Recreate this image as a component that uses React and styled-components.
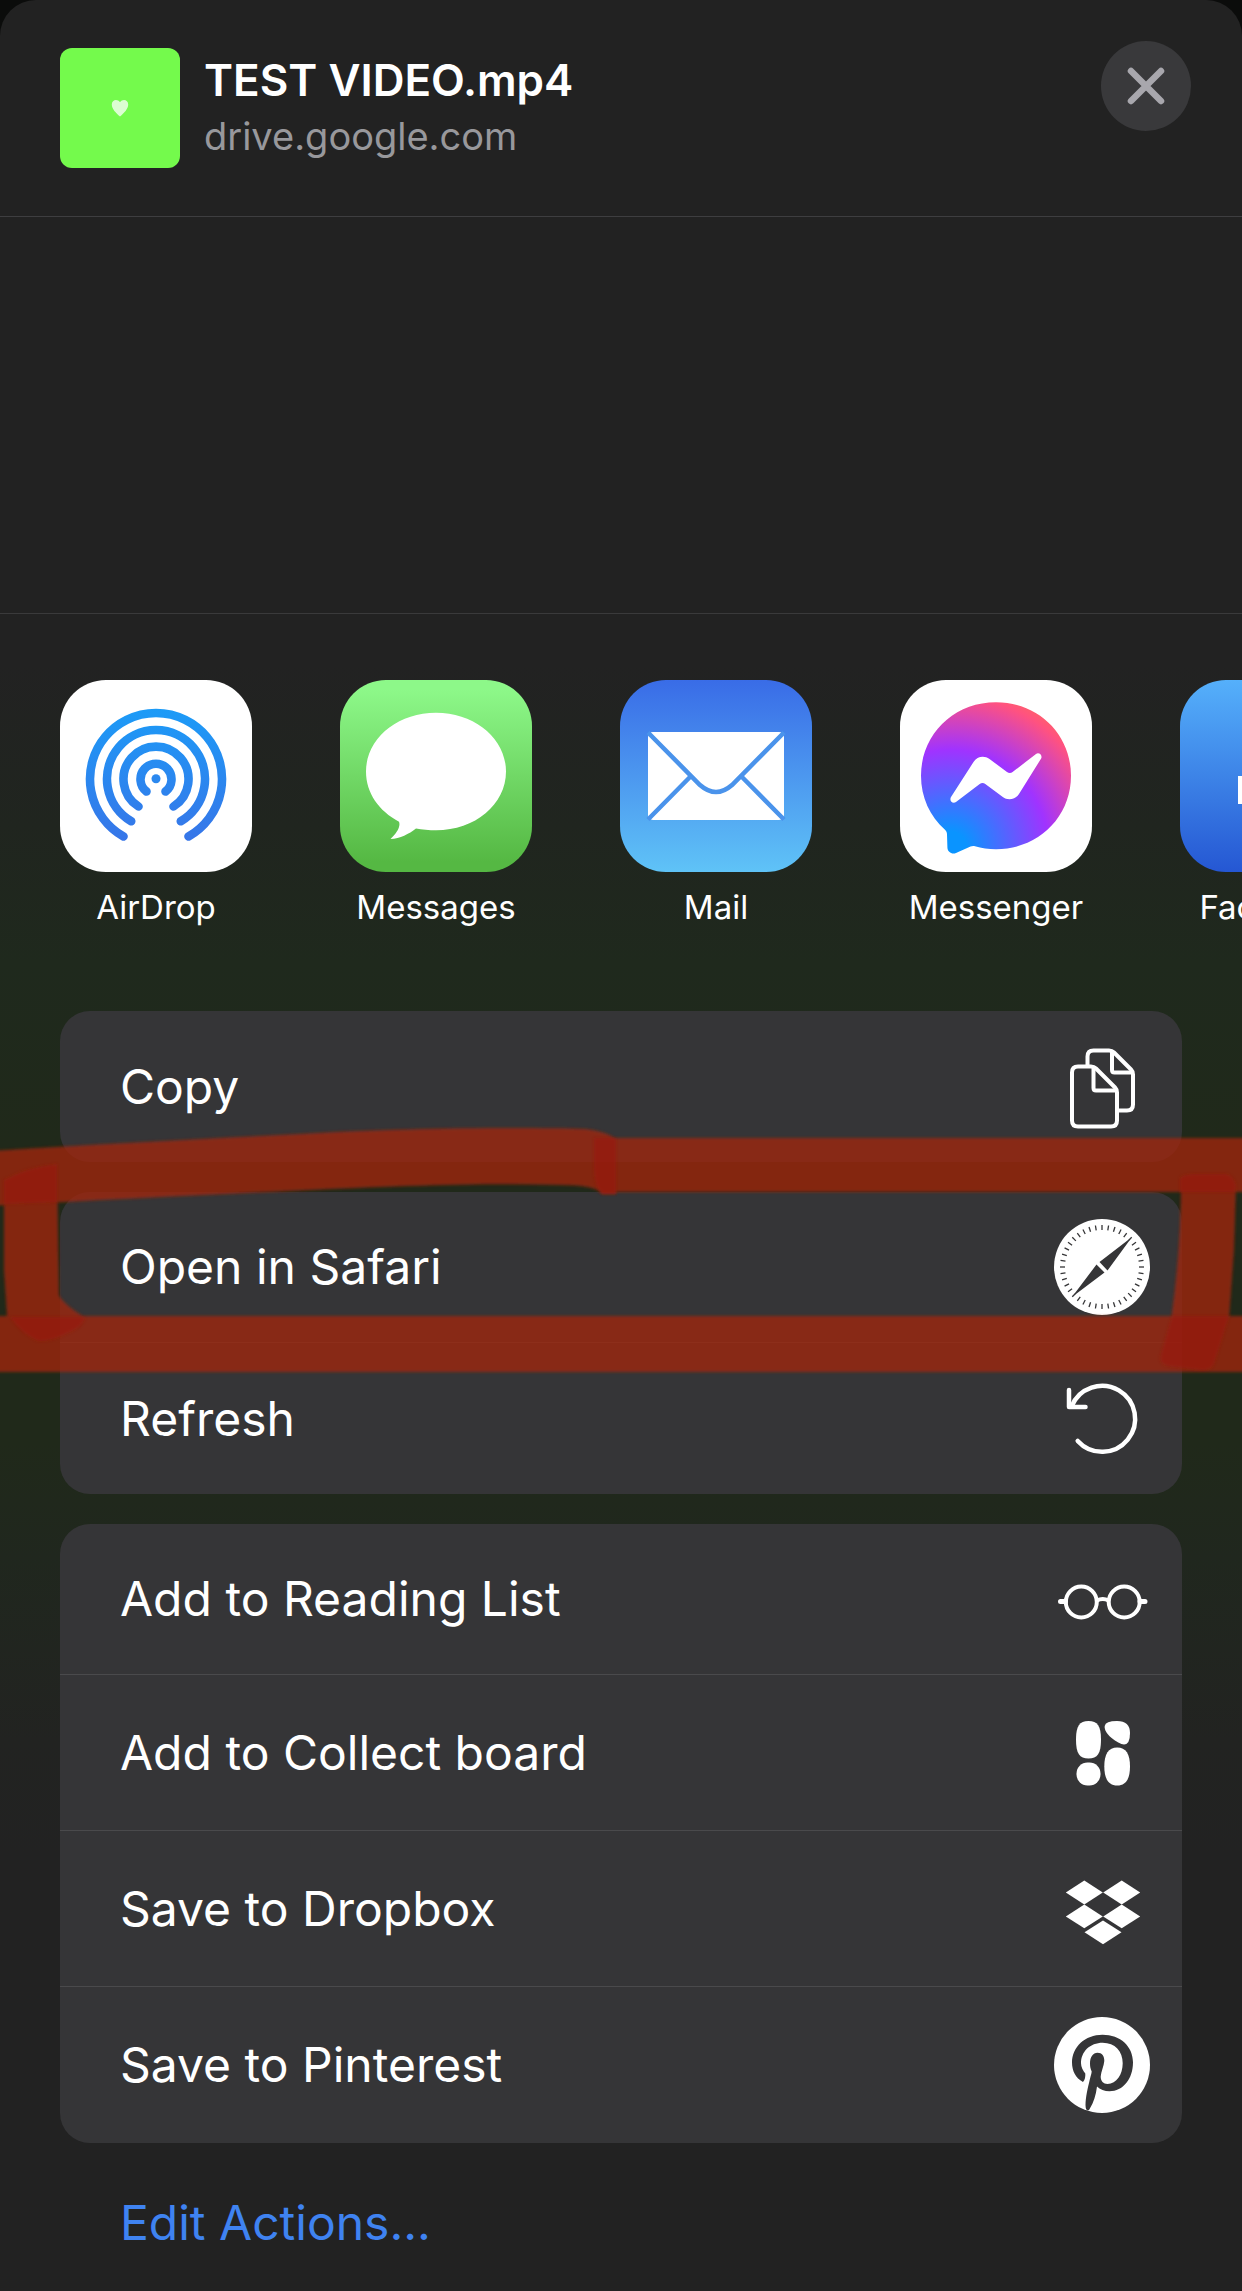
import React from 'react';
import styled, { createGlobalStyle } from 'styled-components';

const GlobalStyle = createGlobalStyle`
  * {
    box-sizing: border-box;
  }

  body {
    margin: 0;
    background: #0b0c0b;
    font-family: Inter, "Liberation Sans", sans-serif;
  }

  button {
    border: none;
    background: none;
    padding: 0;
    color: inherit;
    font-family: inherit;
    cursor: pointer;
  }

  svg {
    display: block;
  }
`;

const Sheet = styled.main`
  min-height: 100vh;
  border-radius: 36px 36px 0 0;
  overflow: hidden;
  color: white;
  background: linear-gradient(
    180deg,
    #222222 0%,
    #222222 29%,
    #20251f 36%,
    #1f291d 42%,
    #20291a 50%,
    #20291a 63%,
    #20271e 68%,
    #222321 76%,
    #222222 81%
  );
`;

const Header = styled.header`
  display: flex;
  align-items: flex-start;
  padding: 48px 51px 48px 60px;
  border-bottom: 1px solid #3e3e40;
`;

const Thumbnail = styled.div`
  display: flex;
  align-items: center;
  justify-content: center;
  width: 120px;
  height: 120px;
  border-radius: 12px;
  background: #74fa4c;
`;

const FileInfo = styled.div`
  flex: 1;
  min-width: 0;
  padding-left: 24px;
`;

const FileName = styled.h1`
  margin: 4px 0 0;
  font-size: 44px;
  line-height: 56px;
  font-weight: 600;
`;

const FileSource = styled.p`
  margin: 4px 0 0;
  font-size: 38px;
  line-height: 48px;
  color: #98989c;
`;

const CloseButton = styled.button`
  display: flex;
  align-items: center;
  justify-content: center;
  width: 90px;
  height: 90px;
  margin-top: -7px;
  border-radius: 50%;
  background: #39393b;
`;

const Contacts = styled.section`
  height: 397px;
  border-bottom: 1px solid #3a3a3b;
`;

const Apps = styled.section`
  display: flex;
  gap: 88px;
  padding: 66px 0 84px 60px;
  overflow: hidden;
`;

const AppButton = styled.button`
  flex: 0 0 192px;
  display: flex;
  flex-direction: column;
  align-items: center;
  gap: 15px;
  font-size: 33px;
  line-height: 40px;
`;

const AppTile = styled.span`
  width: 192px;
  height: 192px;
  border-radius: 46px;
  overflow: hidden;
  background: ${({ $fill }) => $fill};
`;

const Actions = styled.section`
  position: relative;
  display: flex;
  flex-direction: column;
  gap: 30px;
  padding: 0 60px;
`;

const Card = styled.ul`
  margin: 0;
  padding: 0;
  list-style: none;
  border-radius: 30px;
  background: #353537;
`;

const Row = styled.li`
  height: ${({ $tall }) => ($tall ? '156px' : '151px')};

  &:not(:last-child) {
    border-bottom: 1px solid #4a4a4c;
  }
`;

const RowButton = styled.button`
  display: flex;
  align-items: center;
  justify-content: space-between;
  width: 100%;
  height: 100%;
  padding: 0 32px 0 60px;
  font-size: 48px;
  line-height: 60px;
  text-align: left;
`;

const Marker = styled.svg`
  position: absolute;
  top: 109px;
  left: 0;
  width: 100%;
  height: 260px;
  pointer-events: none;
`;

const Footer = styled.footer`
  padding: 50px 120px 38px;
`;

const EditButton = styled.button`
  font-size: 48px;
  line-height: 60px;
  color: #3f83f1;
`;

const HeartIcon = () => (
  <svg width="18" height="18" viewBox="0 0 18 18" aria-hidden="true">
    <path d="M9 17.500C5 14 0.800 10 0.800 5.500C0.800 0.500 6.500 -0.500 9 3.200C11.500 -0.500 17.200 0.500 17.200 5.500C17.200 10 13 14 9 17.500Z" fill="#dcfdd2" />
  </svg>
);

const CloseIcon = () => (
  <svg width="40" height="40" viewBox="0 0 40 40" aria-hidden="true">
    <path d="M5 5L35 35M35 5L5 35" stroke="#a8a7ad" strokeWidth="6.500" strokeLinecap="round" />
  </svg>
);

const AirDropIcon = () => (
  <svg width="192" height="192" viewBox="0 0 192 192" aria-hidden="true">
    <defs>
      <linearGradient id="airdrop" gradientUnits="userSpaceOnUse" x1="0" y1="29" x2="0" y2="162">
        <stop offset="0" stopColor="#1c9bf7" />
        <stop offset="1" stopColor="#3775e8" />
      </linearGradient>
    </defs>
    <g fill="none" stroke="url(#airdrop)" strokeWidth="8.600" strokeLinecap="round">
      <path d="M63.500 156.500A66 66 0 1 1 128.500 156.500" />
      <path d="M71.200 141.300A49 49 0 1 1 120.800 141.300" />
      <path d="M78.500 126.500A32.500 32.500 0 1 1 113.500 126.500" />
      <path d="M86.500 111.500A15.500 15.500 0 1 1 105.500 111.500" />
    </g>
    <circle cx="96" cy="98.700" r="4.500" fill="#2b88ef" />
  </svg>
);

const MessagesIcon = () => (
  <svg width="192" height="192" viewBox="0 0 192 192" aria-hidden="true">
    <path
      d="M96 32.700C135 32.700 166 58.500 166 91.500C166 124.500 135 150.300 96 150.300C89 150.300 82 149.500 76 148.500C69 154 60 158.500 50.500 159C56 154 61 147 59 141.700C39 131 26 113 26 91.500C26 58.500 57 32.700 96 32.700Z"
      fill="white"
    />
  </svg>
);

const MailIcon = () => (
  <svg width="192" height="192" viewBox="0 0 192 192" aria-hidden="true">
    <rect x="28" y="52" width="136" height="88" rx="5" fill="white" />
    <g fill="none" stroke="#4a93eb" strokeWidth="4.500">
      <path d="M28 52.500L80 105Q96 119 112 105L164 52.500" />
      <path d="M71 96L28 139.500M121 96L164 139.500" />
    </g>
  </svg>
);

const MessengerIcon = () => (
  <svg width="192" height="192" viewBox="0 0 192 192" aria-hidden="true">
    <defs>
      <radialGradient id="messenger" gradientUnits="userSpaceOnUse" cx="50" cy="168" r="164">
        <stop offset="0" stopColor="#0a94ff" />
        <stop offset="0.100" stopColor="#0a94ff" />
        <stop offset="0.600" stopColor="#a033ff" />
        <stop offset="0.930" stopColor="#ff5280" />
        <stop offset="1" stopColor="#ff6168" />
      </radialGradient>
    </defs>
    <path
      d="M96 22.300C138 22.300 171 54 171 95.800C171 137.500 138 169.200 96 169.200C88.500 169.200 81.500 168.200 75 166.300C73.500 165.900 72 166 70.500 166.600L56 173C52 174.800 47.500 172 47.400 167.500L47 154.500C47 152.500 46.200 151 45 149.800C30 136.500 21 117.500 21 95.800C21 54 54 22.300 96 22.300Z"
      fill="url(#messenger)"
    />
    <path
      d="M51 117L73.500 82C77 76.500 84 75 89.500 79L107 92C108.700 93.300 111 93.300 112.600 92L136 74C139 71.700 143 75.500 141 78.700L119 114C115.500 119.500 108 121 102.800 117L85.300 104C83.700 102.700 81.400 102.700 79.700 104L56 122C52.500 124.500 49 120.500 51 117Z"
      fill="white"
    />
  </svg>
);

const FacebookIcon = () => (
  <svg width="192" height="192" viewBox="0 0 192 192" aria-hidden="true">
    <path
      d="M84 192V124H58V96H84V76C84 50 99 36 123 36C134 36 144 38 144 38V64H131C118 64 114 72 114 80V96H143L138 124H114V192Z"
      fill="white"
    />
  </svg>
);

const CopyIcon = () => (
  <svg width="96" height="96" viewBox="0 0 96 96" aria-hidden="true">
    <g fill="none" stroke="white" strokeWidth="4" strokeLinejoin="round">
      <path d="M33.500 27V17.500Q33.500 11.500 39.500 11.500H55Q58 11.500 60 13.500L77 30.500Q79 32.500 79 35.500V65.500Q79 71.500 73 71.500H64" />
      <path d="M58 12V31Q58 33.500 60.500 33.500H78" />
      <path d="M24 27.500H37Q40 27.500 42 29.500L61 48.500Q63 50.500 63 53.500V81.500Q63 87.500 57 87.500H24Q18 87.500 18 81.500V33.500Q18 27.500 24 27.500Z" />
      <path d="M39.500 28V49Q39.500 51.500 42 51.500H62" />
    </g>
  </svg>
);

const ticks = Array.from({ length: 40 }, (_, i) => i * 9);

const SafariIcon = () => (
  <svg width="96" height="96" viewBox="0 0 96 96" aria-hidden="true">
    <circle cx="48" cy="48" r="48" fill="white" />
    {ticks.map((angle) => (
      <path key={angle} d="M48 6V11" stroke="#353537" strokeWidth="1.300" transform={`rotate(${angle} 48 48)`} />
    ))}
    <path d="M78 18L53.500 51.500L45.500 43ZM18 78L42.500 45.500L50.500 53.500Z" fill="#353537" />
  </svg>
);

const RefreshIcon = () => (
  <svg width="96" height="96" viewBox="0 0 96 96" aria-hidden="true">
    <g fill="none" stroke="white" strokeWidth="4.500" strokeLinecap="round" strokeLinejoin="round">
      <path d="M23.700 70A33 33 0 1 0 17.500 35.500" />
      <path d="M15 19V36H31.500" />
    </g>
  </svg>
);

const GlassesIcon = () => (
  <svg width="96" height="96" viewBox="0 0 96 96" aria-hidden="true">
    <g fill="none" stroke="white" strokeWidth="4">
      <circle cx="27.300" cy="51" r="15.500" />
      <circle cx="70.200" cy="51" r="15.500" />
      <path d="M43 49.500Q48.700 46.500 54.500 49.500" />
      <path d="M6.500 50.500H11.500M86 50.500H91" strokeWidth="5" strokeLinecap="round" />
    </g>
  </svg>
);

const CollectIcon = () => (
  <svg width="96" height="96" viewBox="0 0 96 96" fill="white" aria-hidden="true">
    <path d="M34.500 16C43.500 16 47 21 47 34.500C47 48.500 43.500 53.500 34.500 53.500C25.500 53.500 22 48.500 22 34.500C22 21 25.500 16 34.500 16Z" />
    <rect x="22.500" y="57.500" width="24" height="23" rx="11" />
    <path d="M50.700 21Q51.500 16 63 16Q76 16 76 28Q76 39.500 70 39.500C64 39 49.500 29 50.700 21Z" />
    <path d="M63.200 42.500C72 42.500 76 49 76 61.500C76 74 72 80.500 63.200 80.500C54.500 80.500 50.300 74 50.300 61.500C50.300 49 54.500 42.500 63.200 42.500Z" />
  </svg>
);

const DropboxIcon = () => (
  <svg width="96" height="96" viewBox="0 0 96 96" fill="white" aria-hidden="true">
    <path d="M30.300 19.500L48.800 31.500L30.300 43.500L11.800 31.500Z" />
    <path d="M67.700 19.500L86.200 31.500L67.700 43.500L49.200 31.500Z" />
    <path d="M30.300 43.500L48.800 55.500L30.300 67.200L11.800 55.500Z" />
    <path d="M67.700 43.500L86.200 55.500L67.700 67.200L49.200 55.500Z" />
    <path d="M49 59.500L67.500 71.300L49 83.300L30.500 71.300Z" />
  </svg>
);

const PinterestIcon = () => (
  <svg width="96" height="96" viewBox="0 0 96 96" aria-hidden="true">
    <circle cx="48" cy="48" r="48" fill="white" />
    <path
      d="M29 65C21.500 61 18 53.500 18 45.500C18 30 31 17.700 48.500 17.700C66.500 17.700 79 29.500 79 45.300C79 62 69 74.300 55.500 74.300C50.500 74.300 46 72.500 43 69.500C42 78 39.500 85.500 36 91.300C34.800 94.500 32.300 94 31.700 90.500C31 84 33 74 35 66C36 61 37.500 57 37.700 54.500C36.500 52 36 49.500 36 46.500C36 40 39 35.700 43.500 35.700C48 35.700 50.500 39 50.300 44C50 49 47 54.500 46.700 59.500C46.500 64 49.500 67 53.500 67C62.500 67 68.700 57.500 68.700 46.300C68.700 34 61 25.700 48.700 25.700C36 25.700 27 34.500 27 46.300C27 50 29 54 31.300 56.500C31.500 59.500 31 63 29 65Z"
      fill="#353537"
    />
  </svg>
);

// The strokes share one layer so they stay even; the crossings are drawn again in a deeper red.
const RedMarker = () => (
  <Marker viewBox="0 0 1242 260" preserveAspectRatio="none" aria-hidden="true">
    <defs>
      <filter id="soft" x="-2%" y="-2%" width="104%" height="104%">
        <feGaussianBlur stdDeviation="1.500" />
      </filter>
    </defs>
    <g fill="#a2250f" opacity="0.770" filter="url(#soft)">
      <path d="M-10 31C100 24 200 19 300 14C400 8 520 7 585 9Q610 12 616 20V74H602Q596 65 560 65C480 63 400 66 290 71C200 75 100 80 -10 86Z" />
      <path d="M594 18H1252V72H602Q594 66 594 48Z" />
      <path d="M4 60Q28 47 57 44L59 175Q64 185 86 198V212H8L4 150Z" />
      <path d="M-10 196H1252V252H-10Z" />
      <path d="M1181 60Q1186 52 1198 52H1226Q1236 54 1236 66L1234 130L1229 200H1171Q1181 130 1181 60Z" />
    </g>
    <g fill="#9b1810" opacity="0.600" filter="url(#soft)">
      <path d="M594 18H616V74H602Q594 66 594 48Z" />
      <path d="M4 60Q28 47 57 44V82L4 84Z" />
      <path d="M10 197H85Q84 206 68 213Q50 222 38 221Q22 214 10 197Z" />
      <path d="M1180 58Q1184 54 1196 54H1226Q1234 56 1236 66L1235 72H1180Z" />
      <path d="M1172 196H1229L1214 244Q1211 251 1200 250L1168 246Q1158 244 1161 234Z" />
    </g>
  </Marker>
);

const apps = [
  { name: 'AirDrop', fill: 'white', Icon: AirDropIcon },
  { name: 'Messages', fill: 'linear-gradient(#8df889 5%, #55b843 95%)', Icon: MessagesIcon },
  { name: 'Mail', fill: 'linear-gradient(#396ce7, #5fc3f7)', Icon: MailIcon },
  { name: 'Messenger', fill: 'white', Icon: MessengerIcon },
  { name: 'Facebook', fill: 'linear-gradient(#55b0fb, #2557d3)', Icon: FacebookIcon },
];

const cards = [
  [{ name: 'Copy', Icon: CopyIcon }],
  [
    { name: 'Open in Safari', Icon: SafariIcon },
    { name: 'Refresh', Icon: RefreshIcon },
  ],
  [
    { name: 'Add to Reading List', Icon: GlassesIcon },
    { name: 'Add to Collect board', Icon: CollectIcon, tall: true },
    { name: 'Save to Dropbox', Icon: DropboxIcon, tall: true },
    { name: 'Save to Pinterest', Icon: PinterestIcon, tall: true },
  ],
];

const App = () => {
  return (
    <>
      <GlobalStyle />
      <Sheet>
        <Header>
          <Thumbnail>
            <HeartIcon />
          </Thumbnail>
          <FileInfo>
            <FileName>TEST VIDEO.mp4</FileName>
            <FileSource>drive.google.com</FileSource>
          </FileInfo>
          <CloseButton type="button" aria-label="Close">
            <CloseIcon />
          </CloseButton>
        </Header>
        <Contacts />
        <Apps>
          {apps.map(({ name, fill, Icon }) => (
            <AppButton key={name} type="button">
              <AppTile $fill={fill}>
                <Icon />
              </AppTile>
              {name}
            </AppButton>
          ))}
        </Apps>
        <Actions>
          {cards.map((rows) => (
            <Card key={rows[0].name}>
              {rows.map(({ name, Icon, tall }) => (
                <Row key={name} $tall={tall}>
                  <RowButton type="button">
                    {name}
                    <Icon />
                  </RowButton>
                </Row>
              ))}
            </Card>
          ))}
          <RedMarker />
        </Actions>
        <Footer>
          <EditButton type="button">Edit Actions...</EditButton>
        </Footer>
      </Sheet>
    </>
  );
};

export default App;
